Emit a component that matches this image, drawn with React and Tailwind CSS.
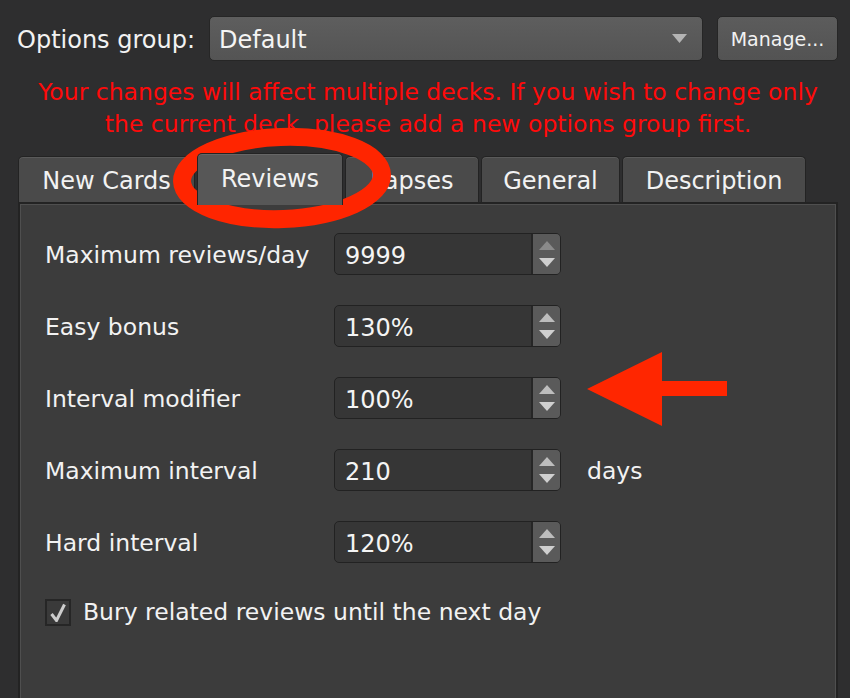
import React from "react";

const font = { fontFamily: '"DejaVu Sans", "Liberation Sans", sans-serif' };

function Tab({ label, width, selected }) {
  if (selected) {
    return (
      <div
        className="relative z-10 -mb-[3px] flex h-[52px] items-center justify-center rounded-t-[5px] border border-b-0 border-[#232323] bg-[#575757] shadow-[inset_0_1px_0_#666]"
        style={{ width }}
      >
        <span className="-mt-[2px] text-[24px] text-[#f2f2f2]">{label}</span>
      </div>
    );
  }
  return (
    <div
      className="flex h-[46px] items-center justify-center rounded-t-[5px] border border-b-0 border-[#232323] bg-[#4a4a4a] shadow-[inset_0_1px_0_#5a5a5a]"
      style={{ width }}
    >
      <span className="pt-[3px] text-[24px] text-[#f2f2f2]">{label}</span>
    </div>
  );
}

function SpinBox({ value, upDim }) {
  return (
    <div className="flex h-[42px] w-[227px] overflow-hidden rounded-[5px] border border-[#222] bg-[#363636]">
      <div className="flex flex-1 items-center pl-[10px] pt-[3px] text-[24px] text-[#f4f4f4]">{value}</div>
      <div className="flex w-[29px] flex-col items-center justify-center gap-[8px] border-l-2 border-[#262626] bg-[#5a5a5a]">
        <svg width="16" height="9" viewBox="0 0 16 9">
          <polygon points="8,0 16,9 0,9" fill={upDim ? "#8a8a8a" : "#bdbdbd"} />
        </svg>
        <svg width="16" height="9" viewBox="0 0 16 9">
          <polygon points="0,0 16,0 8,9" fill="#cfcfcf" />
        </svg>
      </div>
    </div>
  );
}

function Row({ label, value, suffix, upDim }) {
  return (
    <div className="flex h-[42px] items-center">
      <div className="w-[289px] pt-[3px] text-[23.5px] text-[#f2f2f2]">{label}</div>
      <SpinBox value={value} upDim={upDim} />
      {suffix && <div className="ml-[26px] pt-[3px] text-[23.5px] text-[#f2f2f2]">{suffix}</div>}
    </div>
  );
}

export default function App() {
  return (
    <div className="relative h-[698px] w-[850px] overflow-hidden bg-[#2e2e2f]" style={font}>
      {/* options group row */}
      <div className="flex items-center pl-[17px] pt-[16px]">
        <div className="w-[192px] pt-[2px] text-[24px] text-[#f2f2f2]">Options group:</div>
        <div className="flex h-[45px] w-[494px] items-center justify-between rounded-[5px] border border-[#262626] bg-gradient-to-b from-[#5e5e5e] to-[#545454] pl-[9px] pr-[15px]">
          <span className="pt-[2px] text-[24px] text-[#f4f4f4]">Default</span>
          <svg width="15" height="9" viewBox="0 0 15 9">
            <polygon points="0,0 15,0 7.5,9" fill="#b4b4b4" />
          </svg>
        </div>
        <div className="ml-[14px] flex h-[45px] w-[121px] items-center justify-center rounded-[5px] border border-[#262626] bg-gradient-to-b from-[#5c5c5c] to-[#535353] pt-[2px] text-[19px] text-[#f2f2f2]">
          Manage...
        </div>
      </div>

      {/* warning */}
      <div className="ml-[18px] mt-[15px] w-[820px] text-center text-[23.5px] leading-[32px] text-[#ff0a0a]">
        Your changes will affect multiple decks. If you wish to change only
        <br />
        the current deck, please add a new options group first.
      </div>

      {/* tabs */}
      <div className="mt-[13px] flex h-[49px] items-end gap-[2px] pl-[18px]">
        <Tab label="New Cards" width={177} />
        <Tab label="Reviews" width={146} selected />
        <Tab label="Lapses" width={134} />
        <Tab label="General" width={139} />
        <Tab label="Description" width={184} />
      </div>

      {/* panel */}
      <div className="ml-[18px] h-[500px] w-[820px] border-2 border-[#232323] bg-[#3c3c3c] pl-[25px] pt-[29px] shadow-[inset_0_0_0_1px_#4f4f4f]">
        <div className="flex flex-col gap-[30px]">
          <Row label="Maximum reviews/day" value="9999" upDim />
          <Row label="Easy bonus" value="130%" />
          <Row label="Interval modifier" value="100%" />
          <Row label="Maximum interval" value="210" suffix="days" />
          <Row label="Hard interval" value="120%" />
        </div>
        <div className="mt-[32px] flex items-center">
          <div className="flex h-[27px] w-[26px] items-center justify-center border-2 border-[#262626] bg-[#3a3a3a]">
            <svg width="16" height="19" viewBox="0 0 16 19">
              <path d="M1.5 11 L6.5 17.5 L14.5 1.5" fill="none" stroke="#cdcdcd" strokeWidth="3" strokeLinejoin="miter" />
            </svg>
          </div>
          <span className="ml-[12px] text-[23.5px] text-[#f2f2f2]">Bury related reviews until the next day</span>
        </div>
      </div>

      {/* annotations */}
      <svg className="pointer-events-none absolute left-0 top-0" width="850" height="698" viewBox="0 0 850 698">
        <ellipse cx="282" cy="178" rx="100" ry="41" fill="none" stroke="#ff2500" strokeWidth="18" transform="rotate(-2 282 178)" />
        <polygon points="587,389 662,352 662,381 727,381 727,396 662,396 662,426" fill="#ff2600" />
      </svg>
    </div>
  );
}
